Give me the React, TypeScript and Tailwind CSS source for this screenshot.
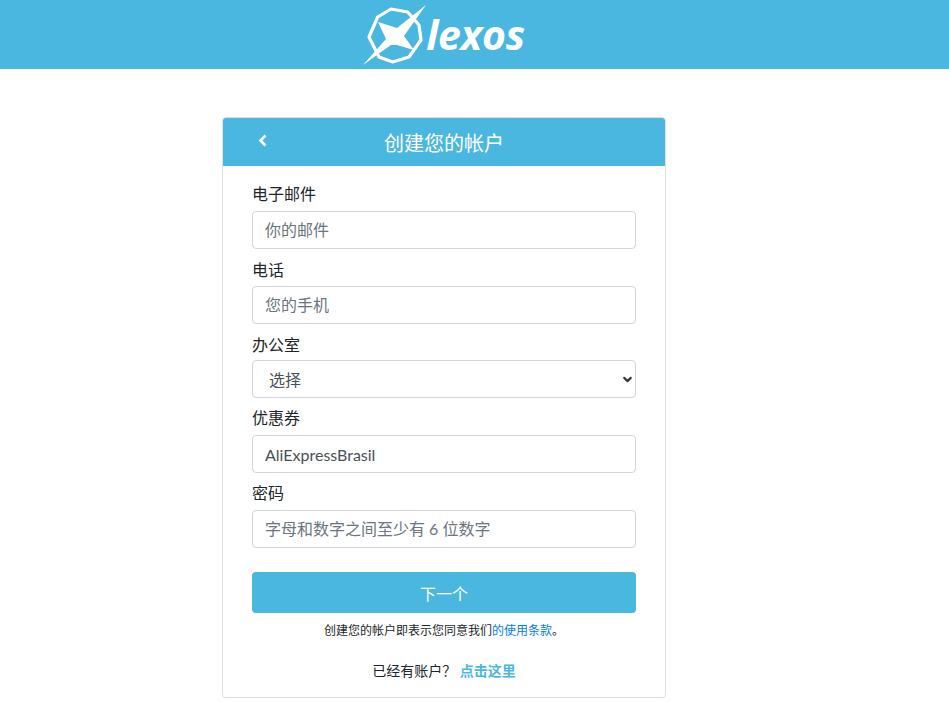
import { ChevronDown } from 'lucide-react'

const fontStack = "font-['Lato','Noto_Sans_CJK_SC',sans-serif]"

const inputClass =
  "block h-[38px] w-full rounded-[4px] border border-[#ced4da] bg-white px-3 text-base text-[#495057] placeholder:text-[#6c757d] outline-none"

function Logo() {
  return (
    <div className="flex items-center">
      <svg width="66" height="66" viewBox="0 0 66 66" fill="none">
        <path d="M16.7 15 L30 7 L46.7 10 L58 23 L60 38 L48 55 L31.7 60 L18 55 L8 35 Z" stroke="white" strokeWidth="3.2" strokeLinejoin="round" />
        <path d="M17 20 L36 26 L65 3 L43 34 L53 48 L36 43 L30 43 L2 63 L25 37 Z" fill="white" />
      </svg>
      <span className="ml-[-1px] font-['Open_Sans',sans-serif] text-[41px] leading-none font-bold tracking-[-0.3px] text-white italic">lexos</span>
    </div>
  )
}

export default function App() {
  return (
    <div className={`min-h-[702px] overflow-hidden bg-white ${fontStack}`}>
      <header className="h-[69px] bg-[#4ab7e1]">
        <div className="flex h-full w-[886px] items-center justify-center">
          <Logo />
        </div>
      </header>

      <main className="flex w-[888px] justify-center pt-[48px]">
        <div className="w-[444px] overflow-hidden rounded-[4px] border border-[#dfdfdf] bg-white">
          <div className="relative flex h-[48px] items-center justify-center bg-[#4ab7e1] pt-[2px] text-[20px] text-white">
            <svg className="absolute top-[16px] left-[35px]" width="10" height="13" viewBox="0 0 10 13" fill="none">
              <path d="M7.5 1.5 L2.5 6.5 L7.5 11.5" stroke="white" strokeWidth="2.6" />
            </svg>
            创建您的帐户
          </div>

          <form className="px-[29px] pt-[16px] pb-[16px]">
            <div className="mb-[9px]">
              <label className="mb-[5px] block text-base leading-6 text-[#212529]">电子邮件</label>
              <input className={`${inputClass} pb-[2px]`} placeholder="你的邮件" />
            </div>
            <div className="mb-[9px]">
              <label className="mb-[4px] block text-base leading-6 text-[#212529]">电话</label>
              <input className={`${inputClass} pb-[2px]`} placeholder="您的手机" />
            </div>
            <div className="mb-[8px]">
              <label className="mb-[3px] block text-base leading-6 text-[#212529]">办公室</label>
              <div className="relative">
                <div className={`${inputClass} flex items-center pt-[2px] pl-4`}>选择</div>
                <ChevronDown className="absolute top-[13px] right-[2px] h-[13px] w-[13px] text-[#343a40]" strokeWidth={4} />
              </div>
            </div>
            <div className="mb-[8px]">
              <label className="mb-[5px] block text-base leading-6 text-[#212529]">优惠券</label>
              <input className={inputClass} defaultValue="AliExpressBrasil" />
            </div>
            <div className="mb-[24px]">
              <label className="mb-[5px] block text-base leading-6 text-[#212529]">密码</label>
              <input className={`${inputClass} pb-[2px]`} placeholder="字母和数字之间至少有 6 位数字" />
            </div>

            <button type="button" className="block h-[41px] w-full rounded-[4px] bg-[#4ab7e1] pt-[3px] text-base text-white">
              下一个
            </button>

            <p className="mt-[9px] text-center text-[12px] leading-[18px] text-[#212529]">
              创建您的帐户即表示您同意我们<a href="#" className="text-[#007bff]">的使用条款</a>。
            </p>

            <p className="mt-[20px] text-center text-[14px] leading-[21px] text-[#212529]">
              已经有账户？ <a href="#" className="font-bold text-[#4ab7e1]">点击这里</a>
            </p>
          </form>
        </div>
      </main>
    </div>
  )
}
